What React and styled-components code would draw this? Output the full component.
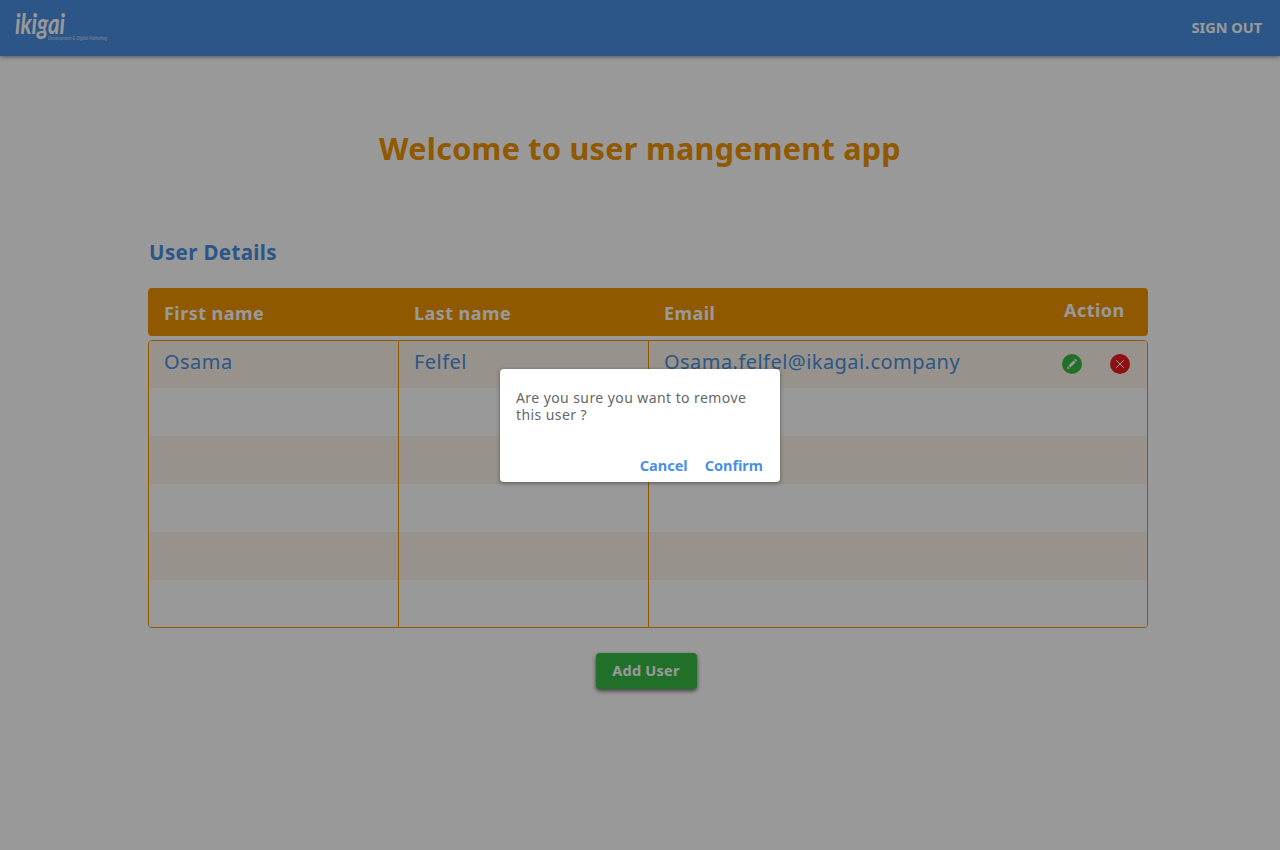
import React from 'react';
import styled, { createGlobalStyle } from 'styled-components';

const Global = createGlobalStyle`
  *, *::before, *::after { box-sizing: border-box; }
  body {
    margin: 0;
    background: #fff;
    font-family: "Noto Sans", "Open Sans", sans-serif;
    overflow: hidden;
  }
`;

const blue = '#4a90e2';
const orange = '#f09300';
const green = '#37bb46';
const red = '#ed1c24';

const Page = styled.div`
  position: relative;
  height: 850px;
  display: flex;
  flex-direction: column;
`;

const Toolbar = styled.header`
  height: 56px;
  flex: none;
  display: flex;
  justify-content: space-between;
  align-items: center;
  padding: 0 18px 0 14px;
  background: ${blue};
  box-shadow: 0 1px 4px rgba(0, 0, 0, 0.45);
`;

const Logo = styled.svg`
  display: block;
  width: 110px;
  height: 40px;
  overflow: visible;
  fill: #fff;
  font-family: Lato, sans-serif;
  font-style: italic;
`;

const SignOut = styled.button`
  border: 0;
  padding: 0 0 2px;
  background: none;
  color: #fff;
  font: 700 14.5px/24px "Noto Sans", sans-serif;
`;

const Content = styled.main`
  width: 1000px;
  margin-left: 148px;
  display: flex;
  flex-direction: column;
`;

const Title = styled.h1`
  margin: 71px 16px 0 0;
  text-align: center;
  white-space: nowrap;
  color: ${orange};
  font-size: 30.5px;
  font-weight: 700;
  line-height: 42px;
  letter-spacing: 0.3px;
`;

const Subtitle = styled.h2`
  margin: 68px 0 0;
  padding-left: 1px;
  color: ${blue};
  font-size: 20.5px;
  font-weight: 700;
  line-height: 30px;
  letter-spacing: 0.38px;
`;

const columns = '250px 250px 1fr 100px';

const TableHead = styled.div`
  display: grid;
  grid-template-columns: ${columns};
  height: 48px;
  margin-top: 21px;
  border-radius: 4px;
  background: ${orange};
`;

const HeadCell = styled.div`
  padding-left: 16px;
  color: #fff;
  font-size: 18px;
  font-weight: 700;
  line-height: ${(p) => (p.$raised ? 44 : 50)}px;
  letter-spacing: 0.45px;
`;

const TableBody = styled.div`
  height: 288px;
  margin-top: 4px;
  display: grid;
  grid-template-rows: 47px repeat(4, 48px) 47px;
  border: 1px solid ${orange};
  border-radius: 4px;
  overflow: hidden;
`;

const TableRow = styled.div`
  display: grid;
  grid-template-columns: ${columns};
  background: ${(p) => (p.$striped ? '#fcf3e8' : '#fff')};
`;

const Cell = styled.div`
  padding-left: 15px;
  border-right: ${(p) => (p.$divided ? `1px solid ${orange}` : '0')};
  color: ${blue};
  font-size: 20px;
  line-height: 41px;
  letter-spacing: 0.45px;
`;

const Actions = styled.div`
  display: flex;
  gap: 28px;
  padding: 13px 0 0 15px;
`;

const IconButton = styled.button`
  width: 20px;
  height: 20px;
  flex: none;
  border: 0;
  padding: 0;
  border-radius: 50%;
  background: ${(p) => p.$color};

  svg { display: block; }
`;

const AddButton = styled.button`
  width: 101px;
  height: 36px;
  margin: 25px 0 0 448px;
  padding: 0 1px 2px 0;
  border: 0;
  border-radius: 4px;
  background: ${green};
  box-shadow: 0 2px 4px rgba(0, 0, 0, 0.6);
  color: #fff;
  font: 700 14.5px/34px "Noto Sans", sans-serif;
  letter-spacing: 0.25px;
`;

const Overlay = styled.div`
  position: absolute;
  inset: 0;
  display: flex;
  justify-content: center;
  align-items: flex-start;
  padding-top: 369px;
  background: rgba(0, 0, 0, 0.4);
`;

const Dialog = styled.section`
  width: 280px;
  height: 113px;
  display: flex;
  flex-direction: column;
  justify-content: space-between;
  padding: 20px 17px 5px 16px;
  border-radius: 4px;
  background: #fff;
  box-shadow: 0 1px 4px rgba(0, 0, 0, 0.4);
`;

const Message = styled.p`
  margin: 0;
  color: #666;
  font-size: 14px;
  line-height: 17px;
  letter-spacing: 0.42px;
  white-space: pre;
`;

const DialogActions = styled.div`
  display: flex;
  justify-content: flex-end;
  gap: 17px;
`;

const TextButton = styled.button`
  border: 0;
  padding: 0;
  background: none;
  color: ${blue};
  font: 700 14.5px/24px "Noto Sans", sans-serif;
`;

const PencilIcon = () => (
  <svg width="20" height="20" viewBox="0 0 20 20" fill="#fff">
    <path d="M5 15l.8-2.8 2 2zM6.5 11.6l5.1-5.1 1.9 1.9-5.1 5.1zM12.2 5.9l.7-.6q.5-.3.9 0l.9.9q.3.4 0 .9l-.7.7z" />
  </svg>
);

const CloseIcon = () => (
  <svg width="20" height="20" viewBox="0 0 20 20" stroke="#fff" strokeWidth="1">
    <path d="M6.2 6.2l7.6 7.6M13.8 6.2l-7.6 7.6" />
  </svg>
);

const users = [{ first: 'Osama', last: 'Felfel', email: 'Osama.felfel@ikagai.company' }];
const rows = Array.from({ length: 6 }, (_, i) => users[i] || null);

export default function App() {
  return (
    <Page>
      <Global />
      <Toolbar>
        <Logo viewBox="0 0 110 40" aria-label="ikigai">
          <text x="1" y="25.5" fontSize="28" fontWeight="700" textLength="50" lengthAdjust="spacingAndGlyphs">ikigai</text>
          <text x="34" y="31.5" fontSize="5" opacity="0.65" textLength="59" lengthAdjust="spacingAndGlyphs">Development &amp; Digital Marketing</text>
        </Logo>
        <SignOut>SIGN OUT</SignOut>
      </Toolbar>
      <Content>
        <Title>Welcome to user mangement app</Title>
        <Subtitle>User Details</Subtitle>
        <TableHead>
          <HeadCell>First name</HeadCell>
          <HeadCell>Last name</HeadCell>
          <HeadCell>Email</HeadCell>
          <HeadCell $raised>Action</HeadCell>
        </TableHead>
        <TableBody>
          {rows.map((user, i) => (
            <TableRow key={i} $striped={i % 2 === 0}>
              <Cell $divided>{user?.first}</Cell>
              <Cell $divided>{user?.last}</Cell>
              <Cell>{user?.email}</Cell>
              {user && (
                <Actions>
                  <IconButton $color={green} aria-label="Edit"><PencilIcon /></IconButton>
                  <IconButton $color={red} aria-label="Remove"><CloseIcon /></IconButton>
                </Actions>
              )}
            </TableRow>
          ))}
        </TableBody>
        <AddButton>Add User</AddButton>
      </Content>
      <Overlay>
        <Dialog role="dialog">
          <Message>{'Are you sure you want to remove\nthis user ?'}</Message>
          <DialogActions>
            <TextButton>Cancel</TextButton>
            <TextButton>Confirm</TextButton>
          </DialogActions>
        </Dialog>
      </Overlay>
    </Page>
  );
}
